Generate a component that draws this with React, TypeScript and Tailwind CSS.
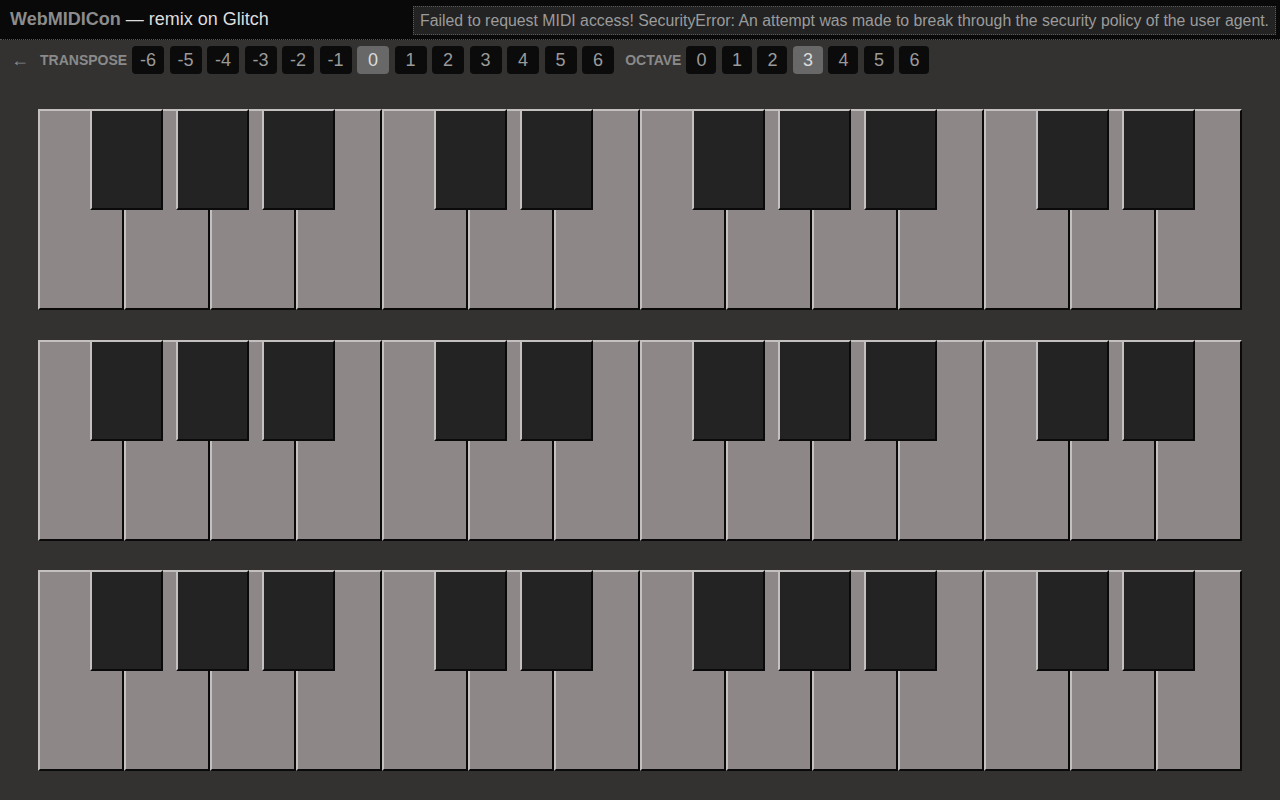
import React from 'react';

const WHITE = ['F', 'G', 'A', 'B', 'C', 'D', 'E', 'F', 'G', 'A', 'B', 'C', 'D', 'E'];
// boundaries (white key index) that carry a black key
const BLACK_AT = [1, 2, 3, 5, 6, 8, 9, 10, 12, 13];
const KEY_W = 86;

const TRANSPOSE = [-6, -5, -4, -3, -2, -1, 0, 1, 2, 3, 4, 5, 6];
const OCTAVES = [0, 1, 2, 3, 4, 5, 6];

function Btn({ label, active, wide }: { label: string; active?: boolean; wide?: boolean }) {
  return (
    <button
      className={
        'h-[28px] rounded-[4px] text-[18px] leading-none flex items-center justify-center ' +
        (wide ? 'w-[32px] ' : 'w-[30px] ') +
        (active ? 'bg-[#686868] text-[#dcdcdc]' : 'bg-[#0b0b0b] text-[#9a9a9a]')
      }
    >
      {label}
    </button>
  );
}

function Keyboard() {
  return (
    <div className="relative flex w-[1204px] h-[201px]">
      {WHITE.map((n, i) => (
        <div
          key={i}
          title={n}
          className="flex-1 bg-[#8d8887] border-2 border-t-[#c3c0bf] border-l-[#c3c0bf] border-b-[#0a0a0a] border-r-[#0a0a0a]"
        />
      ))}
      {BLACK_AT.map((b) => (
        <div
          key={b}
          className="absolute top-0 w-[73px] h-[101px] bg-[#232323] border-2 border-t-[#c3c0bf] border-l-[#c3c0bf] border-b-[#0a0a0a] border-r-[#0a0a0a]"
          style={{ left: b * KEY_W - 34 }}
        />
      ))}
    </div>
  );
}

export default function App() {
  return (
    <div className="min-h-[800px] bg-[#333231] font-['Liberation_Sans',Arial,sans-serif]">
      <header className="h-[40px] bg-[#090909] border-b border-dotted border-[#555] flex items-center justify-between pl-[10px] pr-[4px]">
        <h1 className="text-[18px]">
          <span className="font-bold text-[#8c8c8c]">WebMIDICon</span>
          <span className="text-[#dddddd]"> — remix on Glitch</span>
        </h1>
        <div className="h-[29px] mt-[2px] bg-[#232323] border border-dotted border-[#5a5a5a] px-[6px] flex items-center text-[15.83px] text-[#9b9b9b]">
          Failed to request MIDI access! SecurityError: An attempt was made to break through the security policy of the user agent.
        </div>
      </header>

      <div className="h-[40px] flex items-center pl-[11px]">
        <span className="text-[#8a8a8a] text-[18px] w-[29px]">←</span>
        <span className="text-[14px] font-bold text-[#8a8a8a] mr-[5px]">TRANSPOSE</span>
        <div className="flex gap-[5.5px]">
          {TRANSPOSE.map((t) => (
            <Btn key={t} label={String(t)} active={t === 0} wide />
          ))}
        </div>
        <span className="text-[14px] font-bold text-[#8a8a8a] ml-[11px] mr-[5px]">OCTAVE</span>
        <div className="flex gap-[5.5px]">
          {OCTAVES.map((o) => (
            <Btn key={o} label={String(o)} active={o === 3} />
          ))}
        </div>
      </div>

      <main className="pt-[29px] pl-[38px] flex flex-col gap-[29.5px]">
        <Keyboard />
        <Keyboard />
        <Keyboard />
      </main>
    </div>
  );
}
